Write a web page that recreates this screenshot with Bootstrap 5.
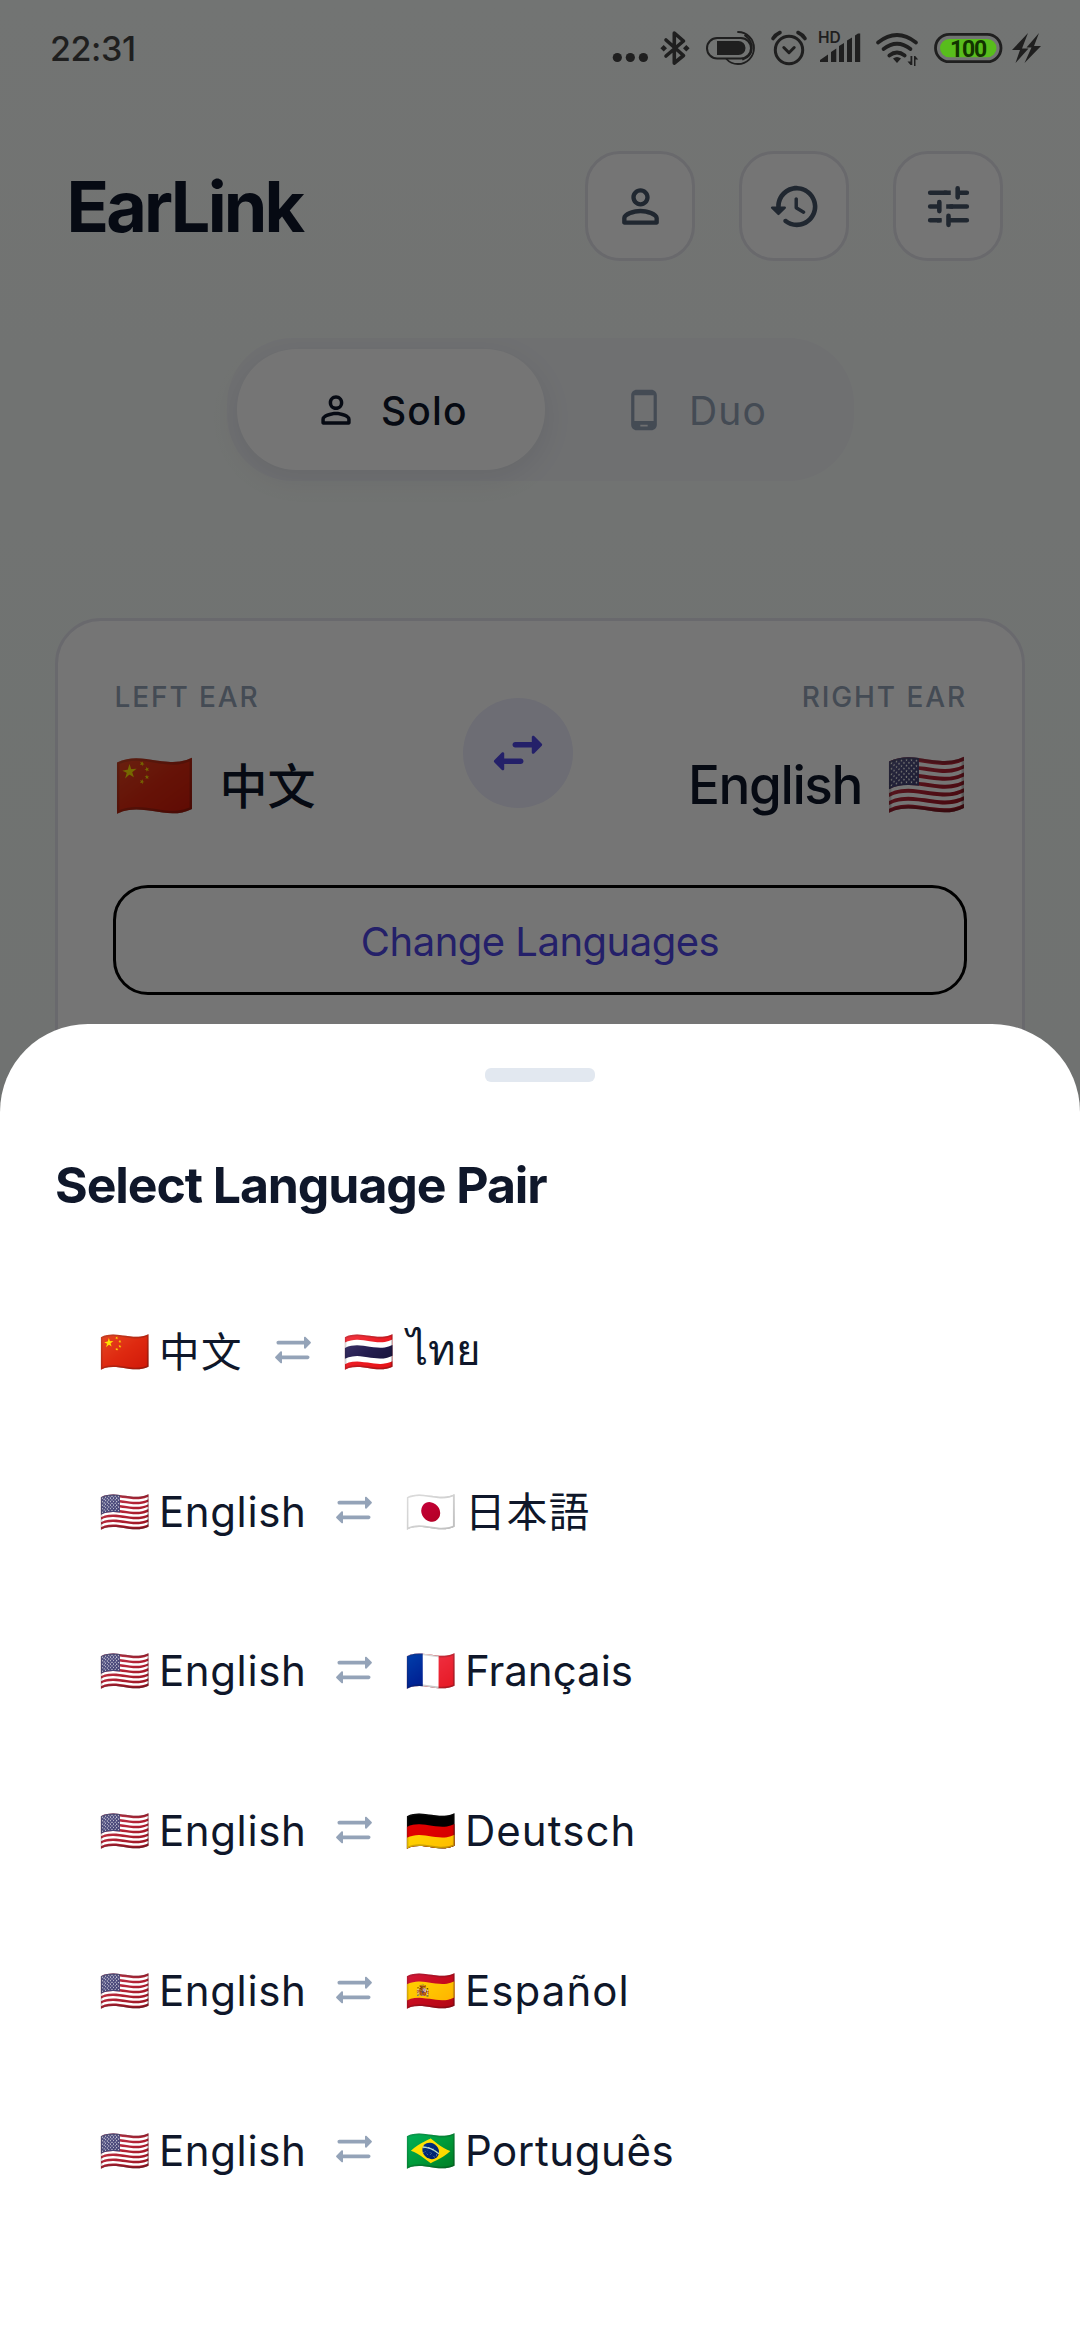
<!DOCTYPE html>
<html lang="en">
<head>
<meta charset="utf-8">
<meta name="viewport" content="width=device-width, initial-scale=1">
<title>EarLink</title>
<link rel="stylesheet" href="https://cdn.jsdelivr.net/npm/bootstrap@5.3.0/dist/css/bootstrap.min.css">
<style>
body { font-family: Inter, "Noto Sans CJK SC", "Noto Sans", sans-serif; color: #0f172a; }
.phone { width: 1080px; height: 2340px; background: linear-gradient(#f9fcfa, #f3f9f6 45%); }
.dim { background: rgba(0,0,0,.54); z-index: 2; }
.ink { fill: currentColor; }
.line { fill: none; stroke: currentColor; stroke-linecap: round; stroke-linejoin: round; }
.statusbar { height: 97px; padding: 0 38px 0 50px; color: #1f1f1f; z-index: 3; }
.clock { font-size: 34px; font-weight: 500; line-height: 97px; letter-spacing: -.4px; }
.hd { font: 600 15.5px Inter, sans-serif; }
.charge { font: 700 23px Roboto, sans-serif; letter-spacing: -1.2px; }
.topbar { margin-top: 151px; height: 110px; padding: 0 77px 0 66.5px; }
.brand { font-size: 70px; line-height: 112px; font-weight: 700; letter-spacing: -2.8px; }
.tools { gap: 44px; }
.tool { width: 110px; height: 110px; border: 3px solid #e4e4ec; border-radius: 35px; background: #fff; color: #475569; }
.modes { width: 627px; height: 143px; margin: 77px 0 0 227px; padding: 11px 10px; border-radius: 66px; background: #f1f3f7; }
.mode { width: 308px; border-radius: 60px; font-size: 39px; color: #94a3b8; }
.mode.on { flex-shrink: 0; background: #fff; color: #0f172a; font-weight: 500; box-shadow: 0 8px 30px rgba(15,23,42,.08); }
.mode svg { margin: 0 23px 0 77px; }
.pair { margin: 137px 55px 0; height: 560px; border: 3px solid #e5e5ee; border-radius: 46px; background: #fff; padding: 0 55px; }
.pair-row { height: 263.5px; }
.ear { width: 350px; padding: 55.5px 0 0 1.5px; }
.cap { font-size: 28px; line-height: 40px; font-weight: 500; color: #94a3b8; letter-spacing: 1.9px; }
.lang { font-size: 53px; line-height: 60px; font-weight: 500; margin-top: 38.5px; letter-spacing: -1.4px; }
.lang-cn { font-size: 48px; letter-spacing: 0; }
.lang-cn span + span { margin: 2px 0 0 28px; }
.swap { width: 110px; height: 110px; margin-top: 76.5px; background: #ededfc; color: #4f46e5; }
.change { height: 110px; border: 3px solid #000; border-radius: 35px; color: #4f46e5; font-size: 40px; letter-spacing: -.5px; padding-top: 5px; }
.sheet { top: 1023.5px; z-index: 4; background: #fff; border-radius: 88px 88px 0 0; }
.grip { width: 110px; height: 14px; border-radius: 6px; margin: 44px auto 0; background: #e2e8f0; }
.heading { font-size: 50px; line-height: 60px; font-weight: 700; letter-spacing: -1.1px; margin: 73.5px 0 57px 55px; }
.item { height: 159.8px; padding: 0 0 0 99px; font-size: 42px; line-height: 60px; }
.name { margin: 0 0 0 11px; letter-spacing: .6px; }
.tight { letter-spacing: 0; }
.wide { letter-spacing: 1.1px; }
.cjk { font-size: 40.5px; letter-spacing: 1.5px; margin-top: 2px; }
.thai { font-family: Inter; letter-spacing: 0; margin: -3px 0 0 14.5px; }
.flag { font-family: "Noto Color Emoji"; letter-spacing: 0; white-space: nowrap; }
.flag-s { width: 49px; font-size: 41.25px; }
.flag-l { width: 77px; font-size: 65px; }
.sync { color: #94a3b8; width: 44px; height: 44px; margin: -3px 28.5px 0 26px; }
.cjk + .sync { margin-left: 28px; }
</style>
</head>
<body>
<div class="phone position-relative overflow-hidden">

  <div class="statusbar position-absolute top-0 start-0 w-100 d-flex justify-content-between">
    <div class="clock">22:31</div>
    <div class="d-flex">
      <svg width="42" height="97" viewBox="610 0 42 97"><g class="ink"><circle cx="617.3" cy="57.5" r="4.6"/><circle cx="630.3" cy="57.5" r="4.6"/><circle cx="643.4" cy="57.5" r="4.6"/></g></svg>
      <svg width="46" height="97" viewBox="652 0 46 97"><path class="line" stroke-width="3.6" d="M666 40l17.5 15.500L674.300 63V33L683.500 41 666 56"/><path class="ink" d="M663.700 45l3.300 3.300-3.300 3.300-3.300-3.300zM686.300 45l3.300 3.300-3.300 3.300-3.300-3.300z"/></svg>
      <svg width="66" height="97" viewBox="698 0 66 97"><rect class="line" stroke-width="2" x="707" y="38" width="44" height="20.500" rx="10.200"/><path class="ink" d="M717 41h21.500a7 7 0 0 1 0 14H717z"/><path class="line" stroke-width="1.800" d="M738 32a16 16 0 0 1 0 32c-5 0-9-2-11.500-5M745 35.500c10 7 9 20-2 24"/></svg>
      <svg width="50" height="97" viewBox="764 0 50 97"><g class="line" stroke-width="3"><circle cx="789" cy="50" r="13.700"/><path d="M783.800 47.500l5.200 5.200 5.200-5.200"/><path stroke-width="3.600" d="M773 38.500q2.500-4 7-6M805 38.500q-2.500-4-7-6"/></g></svg>
      <svg width="56" height="97" viewBox="814 0 56 97"><text class="hd ink" x="818" y="43">HD</text><path class="ink" d="M820 62v-2l8-5.500v7.500zM831 62V52l5.300-3.500V62zM839 62V46l5-3V62zM847 62V40.500l5-3V62zM855 62V35.500l3-2h2.200V62z"/></svg>
      <svg width="56" height="97" viewBox="870 0 56 97"><g class="line" stroke-width="3.700"><path d="M878 42.500q19-15 38 0M883.500 49q13.500-10.500 27 0M889.300 55.500q7.700-6 15.400 0"/></g><path class="ink" d="M893 58.500q4-3 8 0L897 63zM910.500 56h1.800v9h-1.800l-3-3.500h3zM914 56h1.200l3 3.500H915.500V66H914z"/></svg>
      <svg width="80" height="97" viewBox="926 0 80 97"><rect class="line" stroke-width="2.800" x="935.500" y="34.300" width="65.500" height="27.400" rx="13.700"/><rect x="940" y="39" width="56.500" height="18.200" rx="9.100" fill="#58bd1c"/><text class="charge" x="968" y="56.500" text-anchor="middle" fill="#123300">100</text></svg>
      <svg width="36" height="97" viewBox="1006 0 36 97"><path class="ink" d="M1028 33l-16 17h8l-4.500 13 13-14.500h-6.500zM1039 33l-12.500 14.500h5l-7 15.500 16.500-17h-7z"/></svg>
    </div>
  </div>

  <header class="topbar d-flex justify-content-between">
    <h1 class="brand mb-0">EarLink</h1>
    <div class="tools d-flex">
      <div class="tool d-flex align-items-center justify-content-center"><svg width="55" height="55" viewBox="0 0 24 24"><path class="ink" d="M12 5.900a2.100 2.100 0 1 1 0 4.200 2.100 2.100 0 0 1 0-4.200m0 9c2.970 0 6.100 1.460 6.100 2.100v1.100H5.900V17c0-.64 3.130-2.100 6.100-2.100M12 4C9.790 4 8 5.790 8 8s1.790 4 4 4 4-1.790 4-4-1.790-4-4-4m0 9c-2.670 0-8 1.340-8 4v2c0 .55.45 1 1 1h14c.55 0 1-.45 1-1v-2c0-2.660-5.330-4-8-4z"/></svg></div>
      <div class="tool d-flex align-items-center justify-content-center"><svg width="55" height="55" viewBox="0 0 24 24"><path class="ink" d="M13.260 3C8.170 2.860 4 6.950 4 12H2.210c-.45 0-.67.54-.35.85l2.790 2.800c.2.2.51.2.71 0l2.790-2.800c.31-.31.09-.85-.36-.85H6c0-3.900 3.180-7.050 7.100-7 3.720.05 6.850 3.180 6.900 6.900.05 3.910-3.100 7.100-7 7.100-1.610 0-3.100-.55-4.280-1.480-.4-.31-.96-.28-1.320.08-.42.42-.39 1.130.08 1.490C9 20.290 10.910 21 13 21c5.050 0 9.140-4.170 9-9.260-.13-4.690-4.050-8.610-8.740-8.740zm-.51 5c-.41 0-.75.34-.75.75v3.680c0 .35.19.68.49.86l3.120 1.850c.36.21.82.09 1.030-.26.21-.36.09-.82-.26-1.030l-2.880-1.710v-3.400c0-.4-.34-.74-.75-.74z"/></svg></div>
      <div class="tool d-flex align-items-center justify-content-center"><svg width="55" height="55" viewBox="0 0 24 24"><g class="line" stroke-width="2"><path d="M16 4v4M17 6h3M8 10v4M4 12h4M12 16v4M12 18h8"/><path d="M4 6h7M20 12h-7M4 18h4"/></g><path class="ink" d="M10 5h3v2h-3zM11 11h3v2h-3zM7 17h2v2H7z"/></svg></div>
    </div>
  </header>

  <div class="modes d-flex">
    <div class="mode on d-flex align-items-center"><svg width="44" height="44" viewBox="0 0 24 24"><path class="ink" d="M12 5.900a2.100 2.100 0 1 1 0 4.200 2.100 2.100 0 0 1 0-4.200m0 9c2.970 0 6.100 1.460 6.100 2.100v1.100H5.900V17c0-.64 3.130-2.100 6.100-2.100M12 4C9.790 4 8 5.790 8 8s1.790 4 4 4 4-1.790 4-4-1.790-4-4-4m0 9c-2.670 0-8 1.340-8 4v2c0 .55.45 1 1 1h14c.55 0 1-.45 1-1v-2c0-2.660-5.330-4-8-4z"/></svg><span class="wide pt-1">Solo</span></div>
    <div class="mode d-flex align-items-center"><svg width="44" height="44" viewBox="0 0 24 24"><path class="ink" d="M16 1H8C6.340 1 5 2.340 5 4v16c0 1.660 1.340 3 3 3h8c1.660 0 3-1.340 3-3V4c0-1.660-1.340-3-3-3zm-2 20h-4v-1h4v1zm3.250-3H6.750V4h10.500v14z"/></svg><span class="wide pt-1">Duo</span></div>
  </div>

  <section class="pair">
    <div class="pair-row d-flex">
      <div class="ear">
        <div class="cap">LEFT EAR</div>
        <div class="lang lang-cn d-flex align-items-center"><span class="flag flag-l">🇨🇳</span><span>中文</span></div>
      </div>
      <div class="swap rounded-circle d-flex align-items-center justify-content-center flex-shrink-0"><svg width="66" height="66" viewBox="0 0 24 24"><path class="ink" d="M6.140 11.860l-2.780 2.790c-.19.2-.19.51 0 .71l2.780 2.790c.31.32.85.09.85-.35V16H13c.55 0 1-.45 1-1s-.45-1-1-1H6.990v-1.790c0-.45-.54-.67-.85-.35zm14.510-3.210l-2.780-2.790c-.31-.32-.85-.09-.85.35V8H11c-.55 0-1 .45-1 1s.45 1 1 1h6.010v1.790c0 .45.54.67.85.35l2.780-2.790c.2-.19.2-.51.010-.7z"/></svg></div>
      <div class="ear flex-fill text-end">
        <div class="cap">RIGHT EAR</div>
        <div class="lang d-flex align-items-center justify-content-end"><span class="me-4">English</span><span class="flag flag-l me-1">🇺🇸</span></div>
      </div>
    </div>
    <div class="change d-flex align-items-center justify-content-center">Change Languages</div>
  </section>

  <div class="dim position-absolute top-0 start-0 w-100 h-100"></div>

  <section class="sheet position-absolute start-0 bottom-0 w-100">
    <div class="d-flex"><div class="grip"></div></div>
    <h2 class="heading">Select Language Pair</h2>
    <div class="d-flex flex-column">
      <div class="item d-flex align-items-center"><span class="flag flag-s">🇨🇳</span><span class="name cjk">中文</span><svg class="sync" viewBox="0 0 24 24"><use href="#sync"/></svg><span class="flag flag-s">🇹🇭</span><span class="name thai" lang="th">ไทย</span></div>
      <div class="item d-flex align-items-center"><span class="flag flag-s">🇺🇸</span><span class="name">English</span><svg class="sync" viewBox="0 0 24 24"><path id="sync" class="ink" d="M21.650 7.650l-2.790-2.790c-.32-.32-.86-.1-.86.35V7H4c-.55 0-1 .45-1 1s.45 1 1 1h14v1.790c0 .45.54.67.85.35l2.790-2.790c.2-.19.2-.51.010-.7zM2.350 16.350l2.790 2.790c.32.32.86.1.86-.35V17h14c.55 0 1-.45 1-1s-.45-1-1-1H6v-1.790c0-.45-.54-.67-.85-.35l-2.790 2.790c-.2.190-.2.510-.01.7z"/></svg><span class="flag flag-s">🇯🇵</span><span class="name cjk" lang="ja">日本語</span></div>
      <div class="item d-flex align-items-center"><span class="flag flag-s">🇺🇸</span><span class="name">English</span><svg class="sync" viewBox="0 0 24 24"><use href="#sync"/></svg><span class="flag flag-s">🇫🇷</span><span class="name tight">Français</span></div>
      <div class="item d-flex align-items-center"><span class="flag flag-s">🇺🇸</span><span class="name">English</span><svg class="sync" viewBox="0 0 24 24"><use href="#sync"/></svg><span class="flag flag-s">🇩🇪</span><span class="name wide">Deutsch</span></div>
      <div class="item d-flex align-items-center"><span class="flag flag-s">🇺🇸</span><span class="name">English</span><svg class="sync" viewBox="0 0 24 24"><use href="#sync"/></svg><span class="flag flag-s">🇪🇸</span><span class="name wide">Español</span></div>
      <div class="item d-flex align-items-center"><span class="flag flag-s">🇺🇸</span><span class="name">English</span><svg class="sync" viewBox="0 0 24 24"><use href="#sync"/></svg><span class="flag flag-s">🇧🇷</span><span class="name">Português</span></div>
    </div>
  </section>
</div>
<script src="https://cdn.jsdelivr.net/npm/bootstrap@5.3.0/dist/js/bootstrap.bundle.min.js"></script>
</body>
</html>
